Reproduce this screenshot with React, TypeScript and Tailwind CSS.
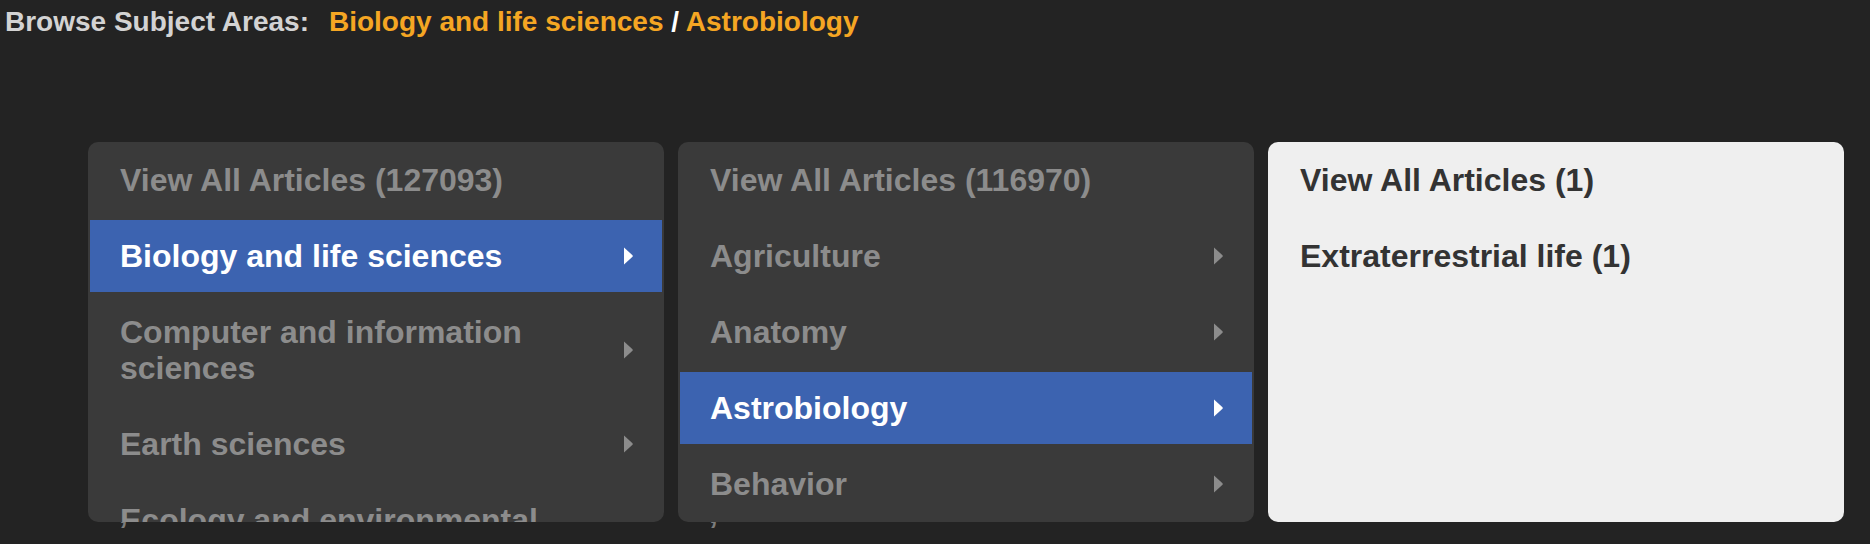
import React from 'react';

interface Item {
    label: string;
    arrow?: boolean;
    active?: boolean;
}

const columns: Item[][] = [
    [
        { label: 'View All Articles (127093)' },
        { label: 'Biology and life sciences', arrow: true, active: true },
        { label: 'Computer and information sciences', arrow: true },
        { label: 'Earth sciences', arrow: true },
        { label: 'Ecology and environmental sciences', arrow: true },
        { label: 'Engineering and technology', arrow: true },
    ],
    [
        { label: 'View All Articles (116970)' },
        { label: 'Agriculture', arrow: true },
        { label: 'Anatomy', arrow: true },
        { label: 'Astrobiology', arrow: true, active: true },
        { label: 'Behavior', arrow: true },
        { label: 'Biochemistry', arrow: true },
    ],
];

function Chevron({ className }: { className?: string }) {
    return (
        <svg width="9" height="18" viewBox="0 0 9 18" className={className}>
            <path d="M0 0.5 L8.5 8.2 Q9 9 8.5 9.8 L0 17.5 Z" fill="currentColor" />
        </svg>
    );
}

function Row({ item }: { item: Item }) {
    return (
        <li className="p-[2px]">
            <div
                className={
                    item.active
                        ? 'flex items-center bg-[#3c63b0] py-[18px] pr-[29px] pl-[30px] text-white'
                        : 'flex items-center py-[18px] pr-[29px] pl-[30px] text-[#8c8c8c]'
                }
            >
                <span className="flex-1 pr-[12px] text-[32px] leading-[36px] font-bold">{item.label}</span>
                {item.arrow && <Chevron className="shrink-0" />}
            </div>
        </li>
    );
}

function DarkColumn({ items }: { items: Item[] }) {
    return (
        <div className="relative w-[576px]">
            {/* stray glyph tail that shows under the panel edge */}
            <span className="absolute top-[354px] left-[31px] z-0 text-[32px] leading-[32px] font-bold text-[#7c7c7c]">,</span>
            <ul className="relative z-10 h-[380px] overflow-hidden rounded-[10px] bg-[#3a3a3a]">
                {items.map((it) => (
                    <Row key={it.label} item={it} />
                ))}
            </ul>
        </div>
    );
}

export default function App() {
    return (
        <div className="h-[544px] w-full overflow-hidden bg-[#232323] font-['Liberation_Sans',Arial,sans-serif]">
            <div className="pt-[6px] pl-[5px] text-[28px] leading-[32px] font-bold">
                <span className="text-[#d3d3d3]">Browse Subject Areas:</span>
                <span className="ml-[20px] text-[#f5a623]">Biology and life sciences</span>
                <span className="text-white"> / </span>
                <span className="text-[#f5a623]">Astrobiology</span>
            </div>

            <div className="mt-[104px] flex gap-[14px] pl-[88px]">
                {columns.map((items, i) => (
                    <DarkColumn key={i} items={items} />
                ))}
                <ul className="h-[380px] w-[576px] overflow-hidden rounded-[10px] bg-[#efefef] text-[#333333]">
                    <li className="p-[2px]">
                        <div className="py-[18px] pl-[30px] text-[32px] leading-[36px] font-bold">View All Articles (1)</div>
                    </li>
                    <li className="p-[2px]">
                        <div className="py-[18px] pl-[30px] text-[32px] leading-[36px] font-bold">Extraterrestrial life (1)</div>
                    </li>
                </ul>
            </div>
        </div>
    );
}
